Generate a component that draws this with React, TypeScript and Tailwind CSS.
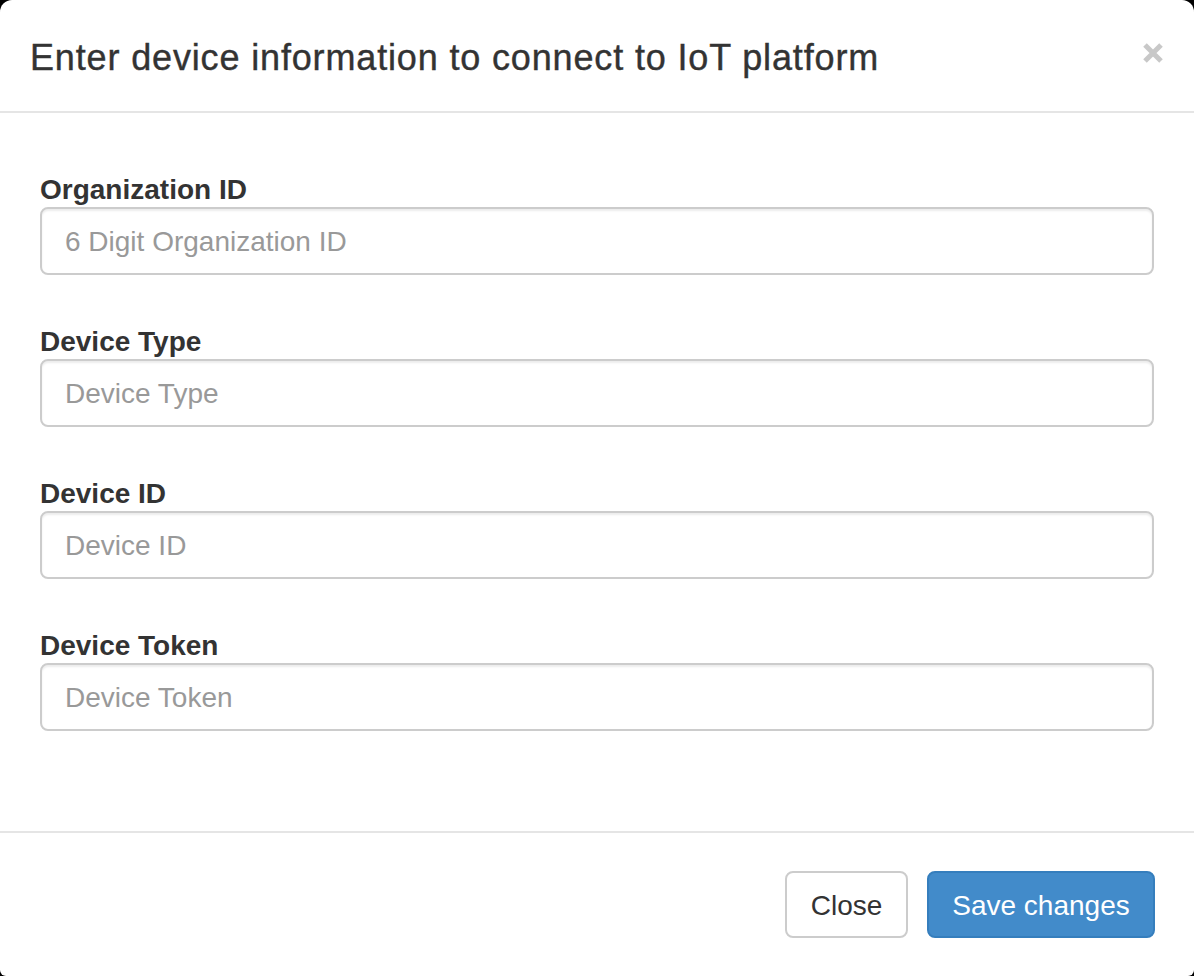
import React from "react";

const fields = [
  { label: "Organization ID", placeholder: "6 Digit Organization ID" },
  { label: "Device Type", placeholder: "Device Type" },
  { label: "Device ID", placeholder: "Device ID" },
  { label: "Device Token", placeholder: "Device Token" },
];

export default function App() {
  return (
    <div className="w-[1194px] h-[976px] bg-black" style={{ fontFamily: '"Liberation Sans", Arial, sans-serif' }}>
      <div className="w-full h-full bg-white rounded-t-[12px] rounded-b-[6px] flex flex-col">
        <div className="h-[113px] shrink-0 border-b-2 border-[#e5e5e5] pl-[30px] pr-[31px] flex items-center justify-between">
          <h4 className="text-[36px] leading-[51px] text-[#333] font-normal tracking-[0.85px] mt-[4px] [-webkit-text-stroke:0.4px_#333]">
            Enter device information to connect to IoT platform
          </h4>
          <svg width="20" height="20" viewBox="0 0 20 20" className="-mt-[6px]">
            <path d="M2 2 L18 18 M18 2 L2 18" stroke="#c8c8c8" strokeWidth="5" />
          </svg>
        </div>
        <div className="flex-1 px-[40px] pt-[60px]">
          {fields.map((f) => (
            <div key={f.label} className="mb-[50px]">
              <label className="block text-[28px] leading-[34px] font-bold text-[#333]">{f.label}</label>
              <input
                type="text"
                placeholder={f.placeholder}
                className="block w-full h-[68px] border-2 border-[#ccc] rounded-[8px] px-[23px] text-[28px] text-[#555] placeholder:text-[#999] shadow-[inset_0_2px_2px_rgba(0,0,0,0.075)] outline-none pt-[2px]"
              />
            </div>
          ))}
        </div>
        <div className="h-[145px] shrink-0 border-t-2 border-[#e5e5e5] flex items-center justify-end gap-[19px] pr-[39px]">
          <button className="w-[123px] h-[67px] pt-[3px] border-2 border-[#ccc] rounded-[8px] bg-white text-[28px] text-[#333]">
            Close
          </button>
          <button className="w-[228px] h-[67px] pt-[3px] border-2 border-[#357ebd] rounded-[8px] bg-[#428bca] text-[28px] text-white">
            Save changes
          </button>
        </div>
      </div>
    </div>
  );
}
